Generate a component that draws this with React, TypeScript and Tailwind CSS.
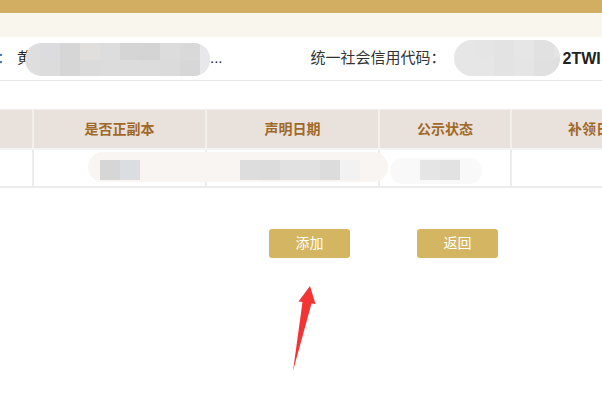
import React from "react";

type Cell = { x: number; w: number; c: string };

function Mosaic({
  width,
  height,
  bg,
  rows,
  cellW,
  offset,
  className,
}: {
  width: number;
  height: number;
  bg: string;
  rows: string[][];
  cellW: number;
  offset: number;
  className?: string;
}) {
  const rh = height / rows.length;
  return (
    <div
      className={"relative shrink-0 overflow-hidden rounded-full " + (className || "")}
      style={{ width, height, background: bg }}
    >
      {rows.map((r, ri) => (
        <div key={ri} className="flex" style={{ height: rh, marginLeft: offset }}>
          {r.map((c, ci) => (
            <div key={ci} className="shrink-0" style={{ width: cellW, height: rh, background: c }} />
          ))}
        </div>
      ))}
    </div>
  );
}

function Squares({ top, h, cells }: { top: number; h: number; cells: Cell[] }) {
  return (
    <>
      {cells.map((s, i) => (
        <div
          key={i}
          className="absolute"
          style={{ left: s.x, top, width: s.w, height: h, background: s.c }}
        />
      ))}
    </>
  );
}

export default function App() {
  return (
    <div className="relative h-[403px] w-[602px] overflow-hidden bg-white font-['Liberation_Sans','Noto_Sans_CJK_SC',sans-serif]">
      <div className="h-[13px] bg-[#d2ae62]" />
      <div className="h-[24px] bg-[#f9f6ee]" />

      {/* info row */}
      <div className="flex h-[44px] items-center overflow-hidden whitespace-nowrap border-b border-[#e6e6e6] text-[15px] text-[#333]">
        <span className="-ml-[3px] text-[#2a6fb0]">：</span>
        <span className="ml-[5px] text-[#222]">黄</span>
        <Mosaic
          className="-ml-[7px] mt-[2px]"
          width={185}
          height={33}
          bg="#dedede"
          cellW={20}
          offset={15}
          rows={[
            ["#dcdcde", "#d6d6d6", "#e0dfde", "#dddddd", "#d5d5d5", "#d4d4d4", "#dcdcdc", "#d9d9d9", "#e8e8ea"],
            ["#dcdcdc", "#d6d6d6", "#dcdbdb", "#dcdcdd", "#dcdcdc", "#dcdcdc", "#dbdbdb", "#d7d7d7", "#e8e8ea"],
          ]}
        />
        <span className="text-[#222]">...</span>
        <span className="ml-[88px]">统一社会信用代码：</span>
        <Mosaic
          className="ml-[8px] -mt-[2px]"
          width={106}
          height={36}
          bg="#e6e6e6"
          cellW={20}
          offset={20}
          rows={[
            ["#e5e5e5", "#e3e3e3", "#e6e6e6", "#e1e1e1", "#e4e4e4"],
            ["#e6e6e6", "#e3e3e3", "#e5e5e5", "#e0e0e0", "#dfdfdf"],
          ]}
        />
        <span className="ml-[3px] text-[16px] font-bold text-[#222]">2TWI</span>
      </div>

      <div className="h-[28px]" />

      {/* table */}
      <div className="border-t border-[#eeeeee]">
        <div className="flex h-[38px] bg-[#e9e2dc] text-[14px] font-bold text-[#a0692a]">
          <div className="w-[32px] shrink-0" />
          <div className="flex w-[173px] shrink-0 items-center justify-center border-l-2 border-[#f3f0ec]">是否正副本</div>
          <div className="flex w-[173px] shrink-0 items-center justify-center border-l-2 border-[#f3f0ec]">声明日期</div>
          <div className="flex w-[132px] shrink-0 items-center justify-center border-l-2 border-[#f3f0ec]">公示状态</div>
          <div className="flex w-[170px] shrink-0 items-center justify-center border-l-2 border-[#f3f0ec]">补领日期</div>
        </div>
        <div className="h-[2px] bg-[#f4f4f4]" />
        <div className="relative flex h-[38px] border-b-2 border-[#ececec]">
          <div className="w-[32px] shrink-0" />
          <div className="w-[173px] shrink-0 border-l-2 border-[#ececec]" />
          <div className="w-[173px] shrink-0 border-l-2 border-[#ececec]" />
          <div className="w-[132px] shrink-0 border-l-2 border-[#ececec]" />
          <div className="w-[170px] shrink-0 border-l-2 border-[#ececec]" />
          {/* redaction overlays */}
          <div className="absolute left-[88px] top-[2px] h-[30px] w-[300px] rounded-[16px] bg-[#f8f5f2]" />
          <div className="absolute left-[390px] top-[8px] h-[26px] w-[92px] rounded-full bg-[#f9f9f9]" />
          <Squares
            top={10}
            h={20}
            cells={[
              { x: 100, w: 20, c: "#d6d6d6" },
              { x: 120, w: 20, c: "#dcdde0" },
              { x: 240, w: 20, c: "#dddddd" },
              { x: 260, w: 20, c: "#dcdcdc" },
              { x: 280, w: 40, c: "#e1e1e1" },
              { x: 320, w: 20, c: "#dcdcdc" },
              { x: 340, w: 20, c: "#f2f2f2" },
              { x: 420, w: 20, c: "#e5e5e5" },
              { x: 440, w: 20, c: "#e2e2e2" },
            ]}
          />
        </div>
      </div>

      {/* buttons */}
      <div className="mt-[41px] flex gap-[67px] pl-[269px]">
        <button className="flex h-[29px] w-[81px] items-center justify-center rounded-[3px] bg-[#d4b562] text-[14px] text-white">
          添加
        </button>
        <button className="flex h-[29px] w-[81px] items-center justify-center rounded-[3px] bg-[#d4b562] text-[14px] text-white">
          返回
        </button>
      </div>

      {/* red arrow annotation */}
      <svg className="absolute left-0 top-0" width="602" height="403" viewBox="0 0 602 403">
        <polygon
          points="310,286 315.5,304 311.5,303.5 293,371 302.5,302 298.5,301.5"
          fill="#f23434"
        />
      </svg>
    </div>
  );
}
